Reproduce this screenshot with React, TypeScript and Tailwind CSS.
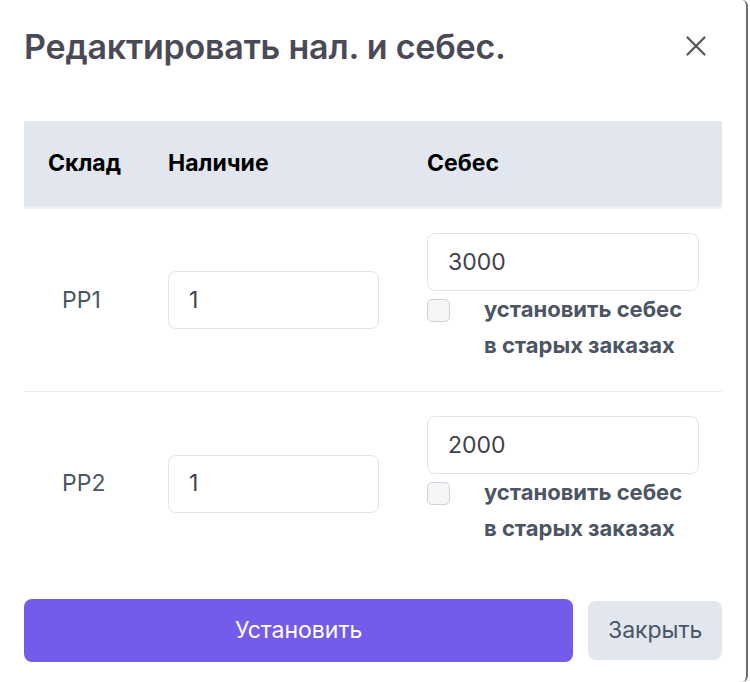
const rows = [
  { id: 1, store: 'PP1', stock: '1', cost: '3000' },
  { id: 2, store: 'PP2', stock: '1', cost: '2000' },
]

export default function App() {
  return (
    <div className="w-[750px] h-[682px] bg-white font-['Inter',sans-serif]">
      <div className="w-[748px] h-[682px] border-r-2 border-[#6e6e6e] rounded-r-[6px] bg-white flex flex-col px-6">
        <div className="flex items-center justify-between h-[94px]">
          <h2 className="text-[34px] font-semibold text-[#4a4a57] leading-none tracking-[-0.2px]">
            Редактировать нал. и себес.
          </h2>
          <button className="mr-[16px] mt-[-2px] text-[#555]">
            <svg width="20" height="20" viewBox="0 0 20 20" fill="none" stroke="currentColor" strokeWidth="2.2" strokeLinecap="round">
              <path d="M1.5 1.5 L18.5 18.5 M18.5 1.5 L1.5 18.5" />
            </svg>
          </button>
        </div>

        <div className="mt-[27px]">
          <div className="h-[88px] bg-[#e2e6ef] border-b-[3px] border-[#eef0f4] flex items-center text-[23px] font-bold text-black">
            <div className="w-[144px] pl-6">Склад</div>
            <div className="w-[259px]">Наличие</div>
            <div>Себес</div>
          </div>

          {rows.map((row, i) => (
            <div
              key={row.id}
              className={'flex h-[183px] ' + (i === 0 ? 'border-b border-[#ececef]' : '')}
            >
              <div className="w-[144px] pl-[38px] self-center text-[23px] text-[#4b5563]">{row.store}</div>
              <div className="w-[259px] self-center">
                <div className="w-[211px] h-[58px] rounded-[8px] border border-[#e3e3ee] flex items-center px-5 text-[23px] text-[#3f3f4e]">
                  {row.stock}
                </div>
              </div>
              <div className="flex flex-col pt-[24px]">
                <div className="w-[272px] h-[58px] rounded-[8px] border border-[#e3e3ee] flex items-center px-5 text-[23px] text-[#3f3f4e]">
                  {row.cost}
                </div>
                <div className="flex items-start">
                  <div className="w-[23px] h-[23px] mt-[8px] rounded-[5px] border border-[#cfd3d9] bg-[#f3f5f7]" />
                  <div className="ml-[34px] text-[22px] font-bold text-[#4b5563] leading-[36px]">
                    установить себес
                    <br />
                    в старых заказах
                  </div>
                </div>
              </div>
            </div>
          ))}
        </div>

        <div className="flex items-center gap-[15px] mt-[24px]">
          <button className="w-[551px] h-[63px] rounded-[8px] bg-[#745be9] text-white text-[23px]">
            Установить
          </button>
          <button className="w-[134px] h-[59px] rounded-[8px] bg-[#e2e6ef] text-[#4b5563] text-[23px]">
            Закрыть
          </button>
        </div>
      </div>
    </div>
  )
}
